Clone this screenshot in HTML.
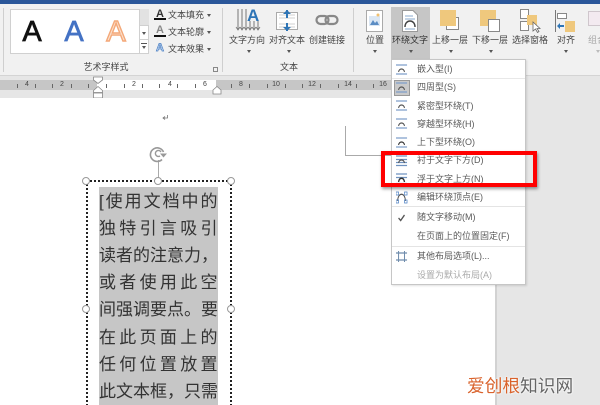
<!DOCTYPE html>
<html><head><meta charset="utf-8">
<style>
html,body{margin:0;padding:0;width:600px;height:405px;overflow:hidden;background:#e6e6e6}
*{box-sizing:border-box}
body{position:relative;font-family:"Liberation Sans","Noto Sans CJK SC",sans-serif;color:#444}
#w{position:absolute;left:0;top:0;width:600px;height:405px;overflow:hidden;filter:blur(.35px)}
.a{position:absolute;white-space:nowrap}
.t{position:absolute;white-space:nowrap;font-size:9px;line-height:12px;color:#444}
.c{text-align:center}
.ar{position:absolute;width:0;height:0;border-left:2.5px solid transparent;border-right:2.5px solid transparent;border-top:3px solid #555}
.sep{position:absolute;top:8px;width:1px;height:64px;background:#cfcfcf}
.h{position:absolute;width:8px;height:8px;border:1.5px solid #999;border-radius:50%;background:#fff}
.m{position:absolute;left:417px;font-size:9px;line-height:12px;color:#5a5a5a;white-space:nowrap}
.r{position:absolute;top:79px;font-size:7px;line-height:11px;color:#444;width:12px;text-align:center}
.tk{position:absolute;top:84px;width:1px;height:4px;background:#666}
.l{position:absolute;left:99px;width:118.500px;height:27px;font-size:17px;line-height:27px;color:#333;white-space:nowrap;overflow:hidden;text-align:justify;text-align-last:justify}
</style></head><body><div id="w">
<!-- top bar + ribbon -->
<div class="a" style="left:0;top:0;width:600px;height:4px;background:#2b579a"></div>
<div class="a" style="left:0;top:4px;width:600px;height:71px;background:#f1f1f1"></div>
<div class="a" style="left:0;top:75px;width:600px;height:1px;background:#d4d4d4"></div>
<div class="sep" style="left:3px"></div><div class="sep" style="left:222px"></div><div class="sep" style="left:353px"></div>

<!-- wordart gallery -->
<div class="a" style="left:10px;top:9px;width:139px;height:45px;background:#fff;border:1px solid #d0d0d0"></div>
<div class="a" style="left:139px;top:9px;width:10px;height:16px;background:#e2e2e2"></div>
<div class="a" style="left:139px;top:9px;width:1px;height:45px;background:#d0d0d0"></div>
<div class="a" style="left:139px;top:25px;width:10px;height:1px;background:#d0d0d0"></div>
<div class="a" style="left:139px;top:39px;width:10px;height:1px;background:#d0d0d0"></div>
<div class="ar" style="left:141.5px;top:32px"></div>
<div class="ar" style="left:141.5px;top:46px"></div>
<div class="a" style="left:141px;top:43px;width:6px;height:1px;background:#555"></div>
<div class="a" style="left:17px;top:14px;width:30px;font-size:29px;line-height:36px;color:#111;-webkit-text-stroke:.7px #111;text-align:center">A</div>
<div class="a" style="left:59px;top:14px;width:30px;font-size:29px;line-height:36px;color:#4472c4;-webkit-text-stroke:.7px #4472c4;text-align:center">A</div>
<div class="a" style="left:101px;top:14px;width:30px;font-size:29px;line-height:36px;color:#fbe0cd;-webkit-text-stroke:1.4px #f4a878;text-align:center">A</div>
<div class="t c" style="left:74px;top:61px;width:64px">艺术字样式</div>

<!-- text fill/outline/effect -->
<div class="a" style="left:156px;top:9px;font-size:11px;line-height:11px;color:#333;font-weight:bold">A</div>
<div class="a" style="left:154px;top:18px;width:12px;height:2px;background:#111"></div>
<div class="a" style="left:156px;top:25px;font-size:11px;line-height:11px;color:#888;font-weight:bold">A</div>
<div class="a" style="left:154px;top:35px;width:12px;height:2px;background:#111"></div>
<div class="a" style="left:156px;top:43px;font-size:11px;line-height:11px;color:#cfe0f5;-webkit-text-stroke:.7px #4a7fc4;font-weight:bold">A</div>
<div class="t" style="left:168px;top:9px">文本填充</div>
<div class="t" style="left:168px;top:26px">文本轮廓</div>
<div class="t" style="left:168px;top:43px">文本效果</div>
<div class="ar" style="left:207px;top:14px"></div>
<div class="ar" style="left:207px;top:31px"></div>
<div class="ar" style="left:207px;top:48px"></div>
<div class="a" style="left:213px;top:67px;width:5px;height:5px;border:1px solid #888"></div>

<!-- text direction -->
<svg class="a" style="left:235px;top:7px" width="26" height="26">
<path d="M3 2V22M7 2V22M11 2V22M15 14V22M19 14V22M23 14V22" stroke="#777" stroke-width="1" fill="none"/>
<path d="M1 20l2 3 2-3M5 20l2 3 2-3M9 20l2 3 2-3M13 20l2 3 2-3M17 20l2 3 2-3M21 20l2 3 2-3" stroke="#777" stroke-width=".8" fill="none"/>
<text x="12" y="14" font-family="Liberation Sans" font-size="17" font-weight="bold" fill="#2e75b6">A</text></svg>
<div class="t c" style="left:222px;top:34px;width:50px">文字方向</div>
<div class="ar" style="left:247px;top:50px"></div>
<!-- align text -->
<svg class="a" style="left:276px;top:9px" width="24" height="24">
<rect x=".5" y="3.5" width="21" height="17" fill="#fff" stroke="#aaa"/>
<path d="M3 6H19M3 9H19M3 15H19M3 18H19" stroke="#d0d0d0"/>
<path d="M11 1V9M11 14V22" stroke="#2e75b6" stroke-width="2"/>
<path d="M7 5l4-4 4 4M7 18l4 4 4-4" fill="#2e75b6"/></svg>
<div class="t c" style="left:262px;top:34px;width:50px">对齐文本</div>
<div class="ar" style="left:287px;top:50px"></div>
<!-- link -->
<svg class="a" style="left:315px;top:14px" width="24" height="12">
<rect x="1.5" y="2" width="12" height="8" rx="4" fill="none" stroke="#888" stroke-width="2.2"/>
<rect x="10.500" y="2" width="12" height="8" rx="4" fill="none" stroke="#888" stroke-width="2.2"/></svg>
<div class="t c" style="left:302px;top:34px;width:50px">创建链接</div>
<div class="t c" style="left:264px;top:61px;width:50px">文本</div>

<!-- position -->
<svg class="a" style="left:366px;top:10px" width="18" height="22">
<rect x=".5" y=".5" width="16" height="21" fill="#fff" stroke="#aaa"/>
<rect x="3" y="6" width="11" height="10" fill="#dbe7f4"/>
<path d="M4 15l3-5 2 3 2-2 2 4z" fill="#5b8dc4"/><circle cx="12" cy="5" r="1.500" fill="#f0c070"/></svg>
<div class="t c" style="left:360px;top:34px;width:30px">位置</div>
<div class="ar" style="left:373px;top:50px"></div>
<!-- wrap text active -->
<div class="a" style="left:391px;top:7px;width:39px;height:52px;background:#c6c6c6"></div>
<svg class="a" style="left:402px;top:10px" width="16" height="22">
<path d="M.5.500H11L15.500 5V21.500H.5z" fill="#fff" stroke="#999"/>
<path d="M3 6H11M3 9H13M3 19H13" stroke="#8aa9cc"/>
<path d="M3 17c0-8 10-8 10 0" fill="none" stroke="#444" stroke-width="1.500"/></svg>
<div class="t c" style="left:385px;top:34px;width:50px;color:#333">环绕文字</div>
<div class="ar" style="left:409px;top:50px"></div>
<!-- bring forward -->
<div class="a" style="left:446px;top:17px;width:13px;height:13px;background:#fff;border:1px solid #888"></div>
<div class="a" style="left:440px;top:10px;width:16px;height:16px;background:#efc87d"></div>
<div class="t c" style="left:425px;top:34px;width:50px">上移一层</div>
<div class="ar" style="left:449px;top:50px"></div>
<!-- send backward -->
<div class="a" style="left:480px;top:10px;width:16px;height:16px;background:#efc87d"></div>
<div class="a" style="left:488px;top:19px;width:12px;height:13px;background:#fff;border:1px solid #888"></div>
<div class="t c" style="left:465px;top:34px;width:50px">下移一层</div>
<div class="ar" style="left:489px;top:50px"></div>
<!-- selection pane -->
<div class="a" style="left:520px;top:9px;width:9px;height:10px;background:#fff;border:1px solid #888"></div>
<div class="a" style="left:520px;top:21px;width:9px;height:10px;background:#fff;border:1px solid #888"></div>
<div class="a" style="left:527px;top:15px;width:10px;height:10px;background:#efc87d"></div>
<svg class="a" style="left:532px;top:21px" width="9" height="12"><path d="M1 1V10L3.500 8 5.500 11.500 7 10.500 5 7.500H8z" fill="#fff" stroke="#666" stroke-width=".8"/></svg>
<div class="t c" style="left:505px;top:34px;width:50px">选择窗格</div>
<!-- align -->
<div class="a" style="left:555px;top:10px;width:1px;height:22px;background:#777"></div>
<div class="a" style="left:557px;top:13px;width:10px;height:6px;background:#fff;border:1px solid #888"></div>
<div class="a" style="left:565px;top:21px;width:10px;height:11px;background:#efc87d"></div>
<svg class="a" style="left:557px;top:22px" width="8" height="8"><path d="M0 4l3-3v2h4v2H3v2z" fill="#2e75b6"/></svg>
<div class="t c" style="left:551px;top:34px;width:30px">对齐</div>
<div class="ar" style="left:564px;top:50px"></div>
<!-- group -->
<div class="a" style="left:588px;top:11px;width:14px;height:15px;background:#f3eaf0;border:1px solid #cfc6cc"></div>
<div class="a" style="left:588px;top:34px;font-size:9px;line-height:12px;color:#aaa">组合</div>
<div class="ar" style="left:596px;top:50px;border-top-color:#bbb"></div>

<!-- ruler -->
<div class="a" style="left:0;top:76px;width:600px;height:22px;background:#e6e6e6"></div>
<div class="a" style="left:0;top:80px;width:97px;height:10px;background:#c6c6c6"></div>
<div class="a" style="left:97px;top:80px;width:119px;height:10px;background:#fff"></div>
<div class="a" style="left:216px;top:80px;width:280px;height:10px;background:#c6c6c6"></div>
<div class="r" style="left:21px">4</div><div class="r" style="left:56px">2</div>
<div class="r" style="left:128px">2</div><div class="r" style="left:164px">4</div><div class="r" style="left:199px">6</div>
<div class="r" style="left:235px">8</div><div class="r" style="left:269px;width:14px">10</div><div class="r" style="left:305px;width:14px">12</div><div class="r" style="left:341px;width:14px">14</div><div class="r" style="left:376px;width:14px">16</div>
<div class="tk" style="left:17px"></div><div class="tk" style="left:35px"></div><div class="tk" style="left:52px"></div><div class="tk" style="left:71px"></div><div class="tk" style="left:88px"></div>
<div class="tk" style="left:106px"></div><div class="tk" style="left:124px"></div><div class="tk" style="left:142px"></div><div class="tk" style="left:159px"></div><div class="tk" style="left:177px"></div><div class="tk" style="left:195px"></div>
<div class="tk" style="left:231px"></div><div class="tk" style="left:249px"></div><div class="tk" style="left:267px"></div><div class="tk" style="left:285px"></div><div class="tk" style="left:302px"></div><div class="tk" style="left:320px"></div><div class="tk" style="left:338px"></div><div class="tk" style="left:356px"></div><div class="tk" style="left:373px"></div>
<svg class="a" style="left:92px;top:76px" width="12" height="23"><path d="M1.500 1H10.500V4L6 7.500 1.500 4z" fill="#fff" stroke="#888" stroke-width=".8"/><path d="M6 10.500L10.500 14.500V16.500H1.500V14.500z" fill="#fff" stroke="#888" stroke-width=".8"/><rect x="1.500" y="17" width="9" height="5" fill="#fff" stroke="#888" stroke-width=".8"/></svg>
<svg class="a" style="left:212px;top:85px" width="10" height="10"><path d="M1 9V5L5 1.500 9 5V9z" fill="#fff" stroke="#888" stroke-width=".8"/></svg>

<!-- document -->
<div class="a" style="left:0;top:98px;width:495px;height:307px;background:#fff"></div>
<div class="a" style="left:495px;top:98px;width:2px;height:307px;background:#d2d2d2"></div>
<div class="a" style="left:345px;top:126px;width:1px;height:30px;background:#aaa"></div>
<div class="a" style="left:345px;top:155px;width:47px;height:1px;background:#aaa"></div>
<svg class="a" style="left:162px;top:114px" width="7" height="7"><path d="M5.500 1V4H1.500M3 2.500L1 4l2 1.500" fill="none" stroke="#777" stroke-width=".8"/></svg>

<!-- text box -->
<div class="a" style="left:85.500px;top:180px;width:146px;height:226px;border:2px dotted #222;border-bottom:0"></div>
<div class="a" style="left:158px;top:160px;width:1px;height:18px;background:#aaa"></div>
<svg class="a" style="left:149px;top:146px" width="19" height="18"><path d="M13 13.500A6.800 6.800 0 1 1 14.500 6" fill="none" stroke="#999" stroke-width="1.600"/><path d="M11 10a3 3 0 1 1 1-4" fill="none" stroke="#999" stroke-width="1.400"/><path d="M11 7.500H18L14.500 11.500z" fill="#999"/></svg>
<div class="h" style="left:82px;top:177px"></div><div class="h" style="left:154px;top:177px"></div><div class="h" style="left:227px;top:177px"></div>
<div class="h" style="left:82px;top:305px"></div><div class="h" style="left:227px;top:305px"></div>

<div class="a" style="left:99px;top:187px;width:118.500px;height:218px;background:#c6c6c6"></div>
<div class="l" style="top:188px">[使用文档中的</div>
<div class="l" style="top:215px">独特引言吸引</div>
<div class="l" style="top:242px">读者的注意力，</div>
<div class="l" style="top:269px">或者使用此空</div>
<div class="l" style="top:296px">间强调要点。要</div>
<div class="l" style="top:324px">在此页面上的</div>
<div class="l" style="top:351px">任何位置放置</div>
<div class="l" style="top:378px">此文本框，只需</div>

<!-- dropdown -->
<div class="a" style="left:391px;top:59px;width:135px;height:226px;background:#fff;border:1px solid #c6c6c6;box-shadow:1px 1px 2px rgba(0,0,0,.12)"></div>
<div class="a" style="left:392px;top:78px;width:133px;height:1px;background:#e8e8e8"></div>
<div class="a" style="left:394px;top:80px;width:16px;height:16px;background:#c9c9c9;border:1px solid #999"></div>
<div class="a" style="left:392px;top:206px;width:133px;height:1px;background:#e4e4e4"></div>
<div class="a" style="left:392px;top:246px;width:133px;height:1px;background:#e4e4e4"></div>
<svg class="a" style="left:396px;top:64px" width="13" height="230">
<g fill="none" stroke-width="1.200" transform="scale(.85,1)">
<g><path d="M0 1H13M0 10H13" stroke="#7f9fc9"/><path d="M3 8c1-4 6-4 7 0" stroke="#555"/></g>
<g transform="translate(0,18)"><path d="M0 1H13M0 10H13" stroke="#7f9fc9"/><path d="M3 8c1-4 6-4 7 0" stroke="#555"/></g>
<g transform="translate(0,36)"><path d="M0 1H13M0 10H13" stroke="#7f9fc9"/><path d="M3 8c1-4 6-4 7 0" stroke="#555"/></g>
<g transform="translate(0,54)"><path d="M0 1H13M0 10H13" stroke="#7f9fc9"/><path d="M3 8c1-4 6-4 7 0" stroke="#555"/></g>
<g transform="translate(0,73)"><path d="M0 1H13M0 10H13" stroke="#7f9fc9"/><path d="M3 8c1-4 6-4 7 0" stroke="#333"/></g>
<g transform="translate(0,91)"><path d="M0 1H13M0 4.500H13M0 7.500H13M0 10.500H13" stroke="#6f92c0"/><path d="M3 8c1-4 6-4 7 0" stroke="#555"/></g>
<g transform="translate(0,109)"><path d="M0 1H13M0 4.500H13M0 10.500H13" stroke="#6f92c0"/><path d="M3 9c1-5 6-5 7 0" stroke="#333" stroke-width="1.600"/></g>
<g transform="translate(0,127)"><path d="M2 10c0-9 9-9 9 0" stroke="#555"/><path d="M0 1h3v3H0zM10 1h3v3h-3zM0 9h3v3H0zM10 9h3v3h-3z" stroke="#4a7fc4" stroke-width=".8"/></g>
<path transform="translate(0,148)" d="M3 6l2.500 2.500L10 3" stroke="#555" stroke-width="1.500"/>
<g transform="translate(0,187)"><path d="M0 2H13M0 9H13M3 0V11M10 0V11" stroke="#6f8cac"/></g>
</g></svg>
<div class="m" style="top:63px">嵌入型(I)</div>
<div class="m" style="top:81px">四周型(S)</div>
<div class="m" style="top:100px">紧密型环绕(T)</div>
<div class="m" style="top:118px">穿越型环绕(H)</div>
<div class="m" style="top:136px">上下型环绕(O)</div>
<div class="m" style="top:154px">衬于文字下方(D)</div>
<div class="m" style="top:173px">浮于文字上方(N)</div>
<div class="m" style="top:191px">编辑环绕顶点(E)</div>
<div class="m" style="top:211px">随文字移动(M)</div>
<div class="m" style="top:230px">在页面上的位置固定(F)</div>
<div class="m" style="top:250px">其他布局选项(L)...</div>
<div class="m" style="top:269px;color:#aaa">设置为默认布局(A)</div>

<!-- red highlight -->
<div class="a" style="left:381px;top:151px;width:156px;height:36px;border:4px solid #f00;box-shadow:1px 2px 3px rgba(0,0,0,.4)"></div>

<!-- watermark -->
<div class="a" style="left:467px;top:376px;font-size:17.700px;line-height:20px;color:#d9622b;text-shadow:0 0 2px #fff,0 0 2px #fff">爱创根<span style="color:#666">知识网</span></div>
</div></body></html>
